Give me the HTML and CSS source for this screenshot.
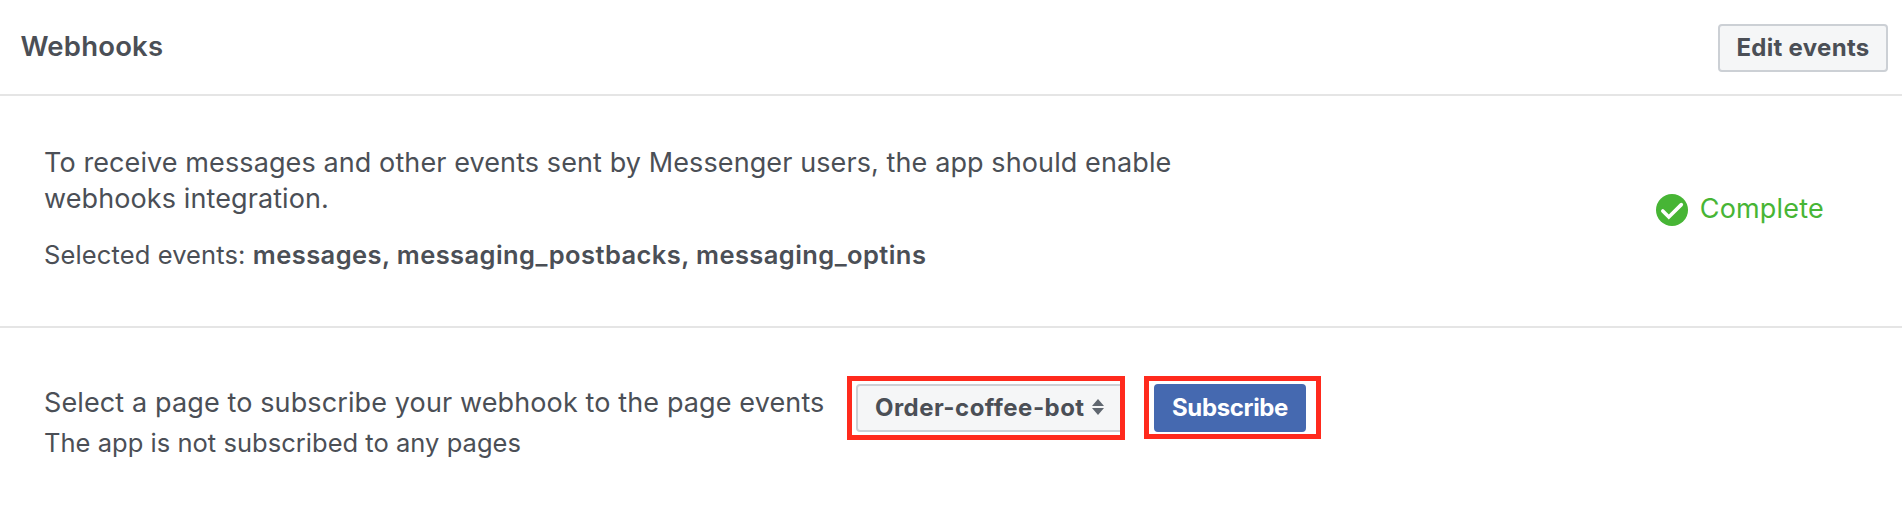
FILE: index.html
```html
<!DOCTYPE html>
<html lang="en">
<head>
<meta charset="utf-8">
<title>Webhooks</title>
<link rel="stylesheet" href="styles.css">
</head>
<body>
<main class="panel">
  <header class="panel-header">
    <h1 class="title">Webhooks</h1>
    <button class="button edit">Edit events</button>
  </header>
  <section class="status-section">
    <div class="description">
      <p class="lead">To receive messages and other events sent by Messenger users, the app should enable<br>webhooks integration.</p>
      <p class="events"><span class="events-label">Selected events: </span><strong class="events-list">messages, messaging_postbacks, messaging_optins</strong></p>
    </div>
    <div class="status">
      <svg class="status-icon" viewBox="0 0 32 32"><circle cx="16" cy="16" r="16" fill="#47b535"/><path d="M6.8 17l6 6L25.3 10.6" fill="none" stroke="#fff" stroke-width="3.6" stroke-linecap="round"/></svg>
      <span class="status-text">Complete</span>
    </div>
  </section>
  <section class="subscribe-section">
    <div class="prompt">
      <p class="prompt-text">Select a page to subscribe your webhook to the page events</p>
      <p class="prompt-note">The app is not subscribed to any pages</p>
    </div>
    <div class="highlight highlight-select">
      <button class="button select"><span class="select-text">Order-coffee-bot</span><svg class="arrows" viewBox="0 0 12 16"><path d="M0 7L6 0l6 7zM0 9h12l-6 7z" fill="#606770"/></svg></button>
    </div>
    <div class="highlight highlight-subscribe">
      <button class="button primary">Subscribe</button>
    </div>
  </section>
</main>
</body>
</html>
```
FILE: styles.css
```css
* { box-sizing: border-box; }
body { margin: 0; background: #fff; color: #4b4f56; font-family: Inter, "Liberation Sans", sans-serif; }
h1, p { margin: 0; white-space: nowrap; }
.panel { height: 520px; overflow: hidden; }
.panel-header { display: flex; justify-content: space-between; height: 96px; padding: 24px 14px 0 20.5px; border-bottom: 2px solid #e5e5e5; }
.title { margin-top: 4px; font-size: 27.5px; line-height: 36px; font-weight: 600; letter-spacing: 0.2px; }
.button { display: flex; align-items: center; justify-content: center; height: 48px; margin: 0; padding: 0; border: 2px solid #ccd0d5; border-radius: 4px; background: #f5f6f7; color: #4b4f56; font-family: inherit; font-size: 24px; line-height: 44px; font-weight: 700; white-space: nowrap; }
.edit { width: 170px; letter-spacing: 0.3px; }
.status-section { display: flex; justify-content: space-between; height: 232px; padding: 49px 78px 0 44px; border-bottom: 2px solid #e5e5e5; }
.lead { font-size: 27px; line-height: 36px; letter-spacing: 0.1px; }
.events { margin-top: 20px; font-size: 25.5px; line-height: 36px; }
.events-label { letter-spacing: 0.12px; }
.events-list { font-weight: 600; letter-spacing: 0.42px; }
.status { display: flex; gap: 12px; height: 36px; margin-top: 46px; align-items: center; color: #47b535; }
.status-icon { width: 32px; height: 32px; margin-top: 2px; }
.status-text { font-size: 27px; line-height: 36px; letter-spacing: 0.2px; }
.subscribe-section { display: flex; align-items: flex-start; padding: 48px 0 0 44px; }
.prompt { width: 803px; padding-top: 9px; }
.prompt-text { font-size: 27px; line-height: 36px; letter-spacing: 0.12px; }
.prompt-note { margin-top: 4px; font-size: 25.5px; line-height: 36px; letter-spacing: 0.03px; }
.highlight { display: flex; border: 5px solid #ff2a1d; overflow: hidden; }
.highlight-select { width: 278px; height: 64px; padding: 3px 0 0 4px; }
.highlight-subscribe { width: 177px; height: 63px; margin-left: 19px; padding: 3px 0 0 5px; }
.select { flex: none; width: 270px; justify-content: flex-start; padding-left: 17px; letter-spacing: 0.47px; }
.arrows { width: 12px; height: 16px; margin-left: 7px; margin-top: -2px; }
.primary { width: 152px; border-color: #4569b0; background: #4569b0; color: #fff; letter-spacing: -0.35px; }
```
